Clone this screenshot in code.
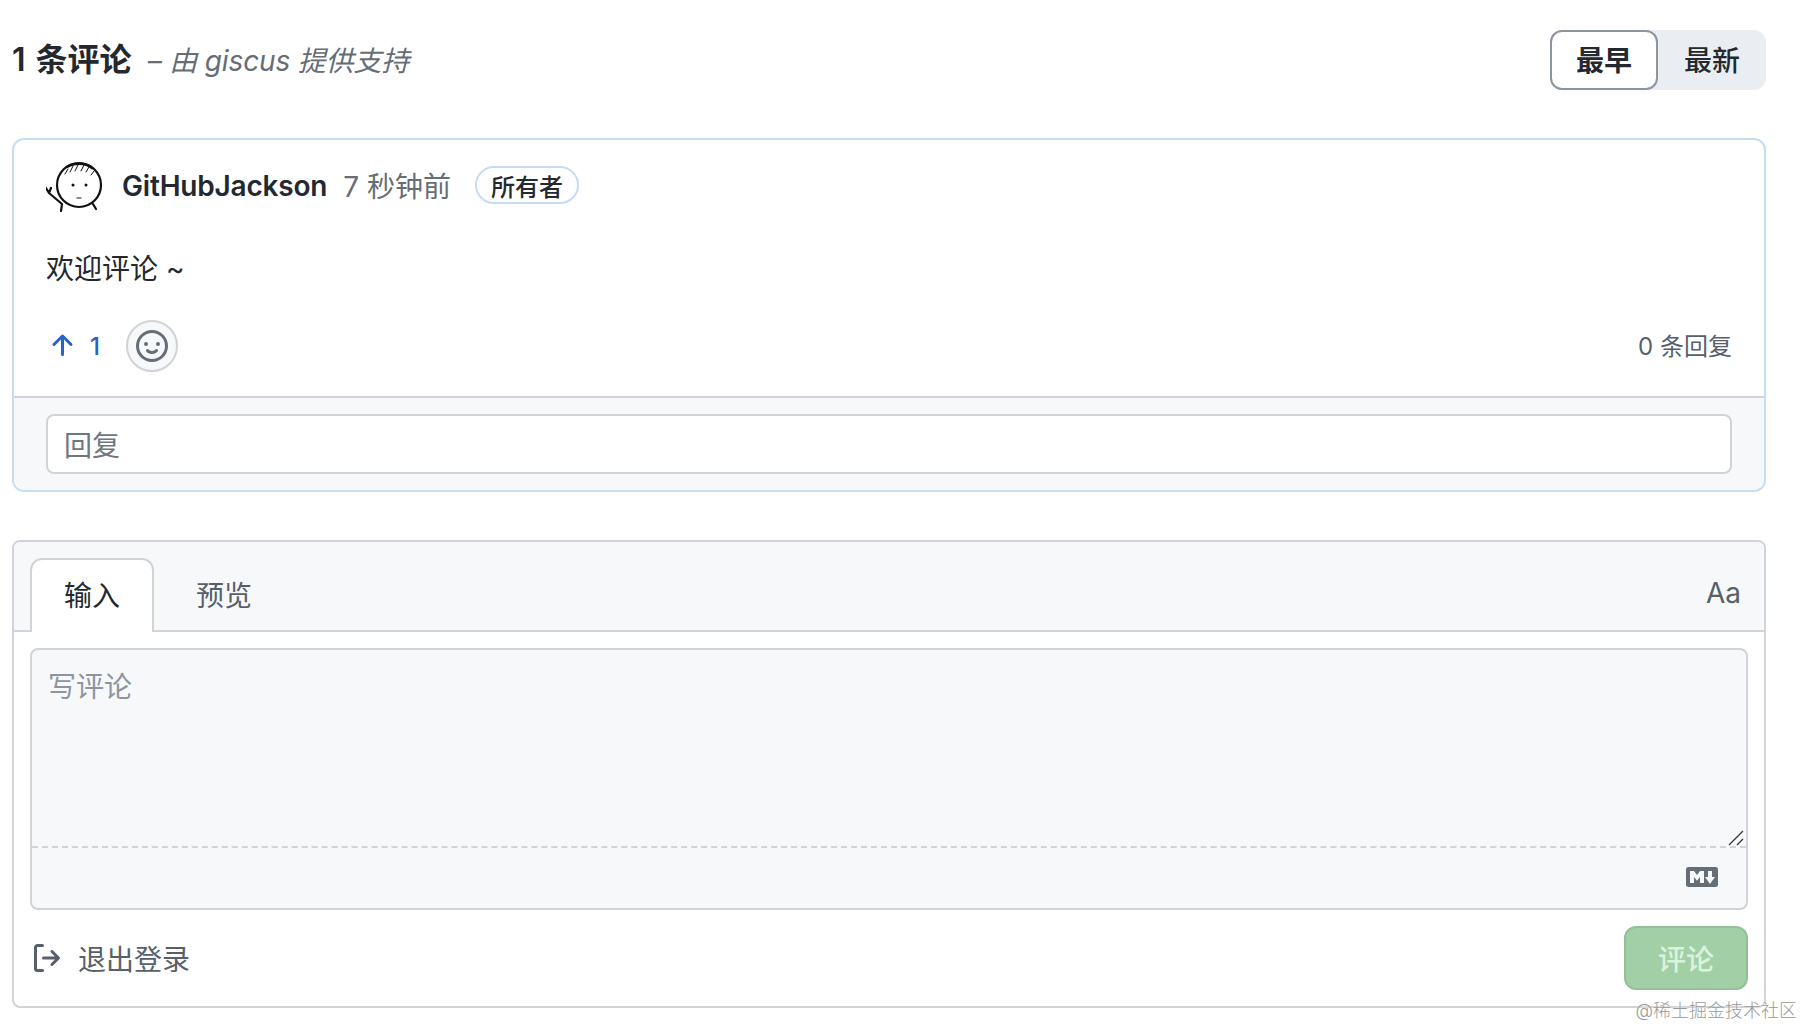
<script>
  let sort = 'oldest';
</script>

<div class="page">
  <header class="head">
    <h4 class="count">1 条评论 <em>– 由 giscus 提供支持</em></h4>
    <div class="sort">
      <button class:active={sort === 'oldest'} on:click={() => (sort = 'oldest')}>最早</button>
      <button class:active={sort === 'newest'} on:click={() => (sort = 'newest')}>最新</button>
    </div>
  </header>

  <section class="comment">
    <div class="comment-main">
      <div class="meta">
        <svg class="avatar" viewBox="0 0 60 52" fill="none" stroke="#111" stroke-width="2.2" stroke-linecap="round">
          <circle cx="33" cy="24" r="22" />
          <path d="M19 13l3-5M24 11l3-6M29 10l3-6M35 10l3-6M40 11l3-5M45 14l3-4" stroke-width="1" />
          <path d="M21 6c6-4 18-5 25 1" stroke-width="2.6" />
          <path d="M16 43L3 32M3 32L0 27M3 32L5 27M16 43l-1 7M47 43l3 5" />
          <circle cx="27" cy="24" r="1.5" fill="#111" stroke="none" />
          <circle cx="40" cy="24" r="1.5" fill="#111" stroke="none" />
          <path d="M31 37h4" stroke="#666" stroke-width="1.4" />
        </svg>
        <span class="name">GitHubJackson</span>
        <span class="time">7 秒钟前</span>
        <span class="badge">所有者</span>
      </div>
      <p class="body">欢迎评论 ~</p>
      <div class="actions">
        <span class="vote">
          <svg viewBox="0 0 16 16" width="32" height="32" fill="currentColor"><path d="M3.47 7.78a.75.75 0 0 1 0-1.06l4.25-4.25a.75.75 0 0 1 1.06 0l4.25 4.25a.751.751 0 0 1-.018 1.042.751.751 0 0 1-1.042.018L9 4.81v7.44a.75.75 0 0 1-1.5 0V4.81L4.53 7.78a.75.75 0 0 1-1.06 0Z" /></svg>
          1
        </span>
        <span class="emoji">
          <svg viewBox="0 0 16 16" width="32" height="32" fill="currentColor"><path d="M8 0a8 8 0 1 1 0 16A8 8 0 0 1 8 0ZM1.5 8a6.5 6.5 0 1 0 13 0 6.5 6.5 0 0 0-13 0Zm3.82 1.636a.75.75 0 0 1 1.038.175l.007.009c.103.118.22.222.35.31.264.178.683.37 1.285.37.602 0 1.02-.192 1.285-.371.13-.088.247-.192.35-.31l.007-.008a.75.75 0 0 1 1.222.87l-.022-.015c.02.013.021.015.021.015v.001l-.001.002-.002.003-.005.007-.014.019a2.066 2.066 0 0 1-.184.213c-.16.166-.338.316-.53.445-.63.418-1.37.638-2.127.629-.946 0-1.652-.308-2.126-.63a3.331 3.331 0 0 1-.715-.657l-.014-.02-.005-.006-.002-.003v-.002h-.001l.613-.432-.614.43a.75.75 0 0 1 .183-1.044ZM12 7a1 1 0 1 1-2 0 1 1 0 0 1 2 0ZM5 8a1 1 0 1 1 0-2 1 1 0 0 1 0 2Zm5.25 2.25.592.416a97.71 97.71 0 0 0-.592-.416Z" /></svg>
        </span>
        <span class="replies">0 条回复</span>
      </div>
    </div>
    <div class="comment-foot">
      <div class="reply">回复</div>
    </div>
  </section>

  <section class="editor">
    <div class="tabs">
      <span class="tab active">输入</span>
      <span class="tab second">预览</span>
      <span class="aa">Aa</span>
    </div>
    <div class="editor-body">
      <div class="write">
        <div class="input">
          写评论
          <svg class="grip" viewBox="0 0 16 16" width="16" height="16" fill="none" stroke="#333" stroke-width="1.3"><path d="M1 15L15 1M9 15l6-6" /></svg>
        </div>
        <div class="md">
          <svg viewBox="0 0 16 16" width="32" height="32" fill="#656d76"><path d="M14.85 3c.63 0 1.15.52 1.14 1.15v7.7c0 .63-.51 1.15-1.15 1.15H1.15C.52 13 0 12.48 0 11.85v-7.7C0 3.52.52 3 1.15 3ZM9 11V5H7L5.5 7 4 5H2v6h2V8l1.5 1.92L7 8v3Zm2.99.5L14.5 8H13V5h-2v3H9.5Z" /></svg>
        </div>
      </div>
      <div class="submit-row">
        <span class="signout">
          <svg viewBox="0 0 16 16" width="32" height="32" fill="currentColor"><path d="M2 2.75C2 1.784 2.784 1 3.75 1h2.5a.75.75 0 0 1 0 1.5h-2.5a.25.25 0 0 0-.25.25v10.5c0 .138.112.25.25.25h2.5a.75.75 0 0 1 0 1.5h-2.5A1.75 1.75 0 0 1 2 13.25Zm10.44 4.5-1.97-1.97a.749.749 0 0 1 .326-1.275.749.749 0 0 1 .734.215l3.25 3.25a.75.75 0 0 1 0 1.06l-3.25 3.25a.749.749 0 0 1-1.275-.326.749.749 0 0 1 .215-.734l1.97-1.97H6.75a.75.75 0 0 1 0-1.5Z" /></svg>
          退出登录
        </span>
        <button class="submit">评论</button>
      </div>
    </div>
  </section>
  <span class="watermark">@稀土掘金技术社区</span>
</div>

<style>
  :global(body) {
    margin: 0;
    background: #fff;
  }

  .page {
    box-sizing: border-box;
    position: relative;
    width: 1802px;
    height: 1028px;
    padding: 30px 36px 0 12px;
    overflow: hidden;
    font-family: Inter, "Noto Sans CJK SC", sans-serif;
    font-size: 28px;
    color: #24292f;
  }

  .head {
    display: flex;
    align-items: center;
    justify-content: space-between;
    height: 60px;
    margin-bottom: 48px;
  }

  .count {
    margin: 0 0 6px;
    font-size: 32px;
    font-weight: 600;
    word-spacing: 2px;
  }

  .count em {
    margin-left: 6px;
    font-size: 28px;
    font-weight: 400;
    color: #656d76;
    word-spacing: 0;
    letter-spacing: -0.15px;
  }

  .sort {
    display: flex;
    background: #eaeef2;
    border-radius: 12px;
  }

  .sort button {
    box-sizing: border-box;
    height: 60px;
    width: 108px;
    padding: 0 0 2px;
    font: inherit;
    font-weight: 500;
    color: #24292f;
    background: transparent;
    border: 2px solid transparent;
    border-radius: 12px;
  }

  .sort button.active {
    font-weight: 600;
    background: #fff;
    border-color: #8c959f;
  }

  .comment {
    border: 2px solid #c4dcf6;
    border-radius: 12px;
    overflow: hidden;
    margin-bottom: 48px;
  }

  .comment-main {
    padding: 20px 32px 0;
    height: 256px;
    box-sizing: border-box;
  }

  .meta {
    display: flex;
    align-items: center;
    height: 50px;
  }

  .avatar {
    width: 60px;
    height: 52px;
    margin-top: 4px;
    margin-right: 16px;
  }

  .name {
    font-weight: 600;
    margin-right: 16px;
    letter-spacing: -0.2px;
    padding-top: 2px;
  }

  .time {
    color: #656d76;
    margin-right: 24px;
  }

  .badge {
    box-sizing: border-box;
    height: 38px;
    padding: 0 14px;
    display: flex;
    align-items: center;
    font-size: 24px;
    font-weight: 500;
    border: 2px solid #c4dcf6;
    border-radius: 19px;
  }

  .body {
    margin: 38px 0 0;
    line-height: 42px;
  }

  .actions {
    display: flex;
    align-items: center;
    margin-top: 30px;
    height: 52px;
  }

  .vote {
    display: flex;
    align-items: center;
    gap: 12px;
    width: 80px;
    font-size: 24px;
    font-weight: 500;
    color: #2563c9;
  }

  .emoji {
    box-sizing: border-box;
    width: 52px;
    height: 52px;
    display: flex;
    align-items: center;
    justify-content: center;
    color: #656d76;
    background: #f6f8fa;
    border: 2px solid #d0d3d7;
    border-radius: 50%;
  }

  .replies {
    margin-left: auto;
    margin-bottom: 4px;
    font-size: 24px;
    color: #57606a;
  }

  .comment-foot {
    padding: 16px 32px;
    background: #f6f8fa;
    border-top: 2px solid #d0d3d7;
  }

  .reply {
    box-sizing: border-box;
    height: 60px;
    padding: 0 16px;
    display: flex;
    align-items: center;
    color: #6e7781;
    background: #fff;
    border: 2px solid #d0d3d7;
    border-radius: 8px;
  }

  .editor {
    box-sizing: border-box;
    height: 468px;
    border: 2px solid #d0d3d7;
    border-radius: 8px;
    overflow: hidden;
  }

  .tabs {
    box-sizing: border-box;
    display: flex;
    align-items: flex-end;
    height: 90px;
    padding: 0 16px;
    background: #f6f8fa;
    border-bottom: 2px solid #d0d3d7;
  }

  .tab {
    box-sizing: border-box;
    width: 124px;
    height: 74px;
    margin-bottom: -2px;
    padding-bottom: 4px;
    display: flex;
    align-items: center;
    justify-content: center;
    color: #57606a;
    border: 2px solid transparent;
    border-bottom: 0;
    border-radius: 12px 12px 0 0;
  }

  .tab.second {
    margin-left: 8px;
  }

  .tab.active {
    color: #24292f;
    background: #fff;
    border-color: #d0d3d7;
  }

  .aa {
    margin-left: auto;
    align-self: center;
    margin-top: 14px;
    margin-right: 7px;
    color: #57606a;
  }

  .editor-body {
    padding: 16px 16px 0;
    background: #fff;
  }

  .write {
    box-sizing: border-box;
    height: 262px;
    background: #f6f8fa;
    border: 2px solid #d0d3d7;
    border-radius: 8px;
  }

  .input {
    box-sizing: border-box;
    position: relative;
    height: 198px;
    padding: 15px 16px 0;
    color: #8c959f;
    border-bottom: 2px dashed #d0d3d7;
  }

  .grip {
    position: absolute;
    right: 2px;
    bottom: 0;
  }

  .md {
    display: flex;
    justify-content: flex-end;
    padding: 13px 28px 0 0;
  }

  .submit-row {
    display: flex;
    align-items: center;
    justify-content: space-between;
    margin-top: 16px;
  }

  .signout {
    display: flex;
    align-items: center;
    gap: 16px;
    color: #57606a;
  }

  .submit {
    box-sizing: border-box;
    width: 124px;
    height: 64px;
    padding: 0;
    font: inherit;
    font-weight: 500;
    color: #dbf3dc;
    background: #a2cfa6;
    border: 2px solid #93c098;
    border-radius: 12px;
  }

  .watermark {
    position: absolute;
    right: 5px;
    bottom: 6px;
    font-size: 18px;
    font-weight: 300;
    color: #999;
    text-shadow: 0 0 2px #fff;
  }
</style>
